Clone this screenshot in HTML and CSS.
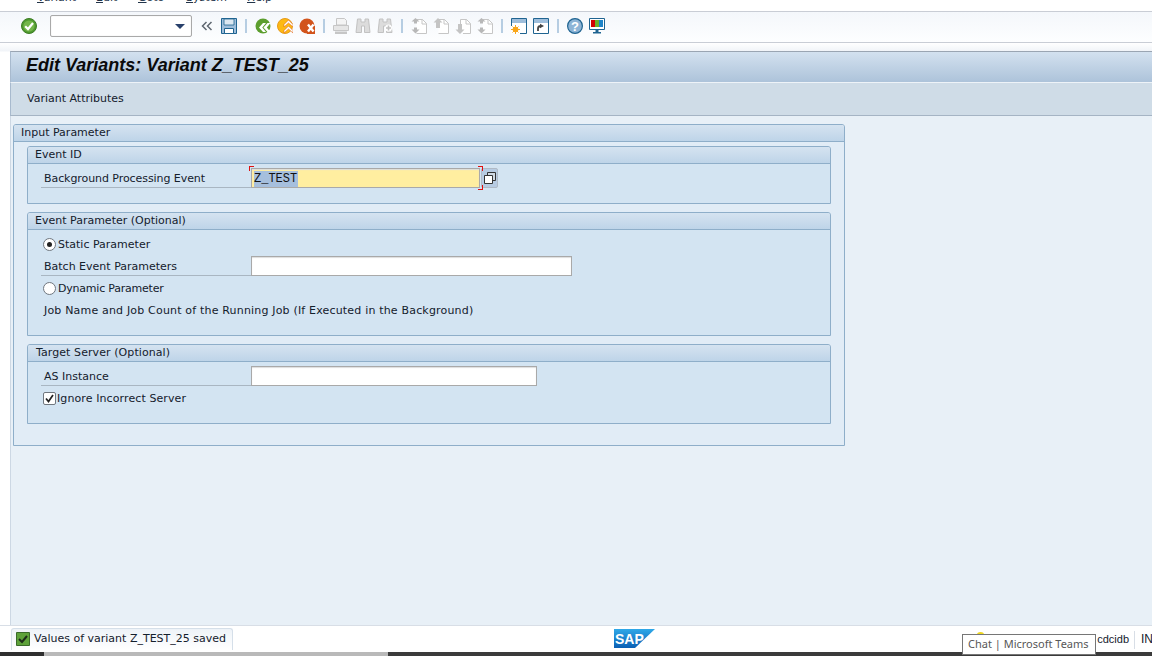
FILE: index.html
```html
<!DOCTYPE html>
<html lang="en">
<head>
<meta charset="utf-8">
<title>Edit Variants</title>
<link rel="stylesheet" href="styles.css">
</head>
<body>
<nav class="menubar">
  <span class="m m1"><u>V</u>ariant</span><span class="m m2"><u>E</u>dit</span><span class="m m3"><u>G</u>oto</span><span class="m m4"><u>S</u>ystem</span><span class="m m5"><u>H</u>elp</span>
</nav>
<header class="toolbar">
  <span class="tool"><svg viewBox="0 0 16 16"><circle cx="8" cy="8" r="7.500" fill="#4f9a2f" stroke="#3c7d24"/><circle cx="8" cy="8" r="5.600" fill="#74b64a"/><path d="M4.200 8.200 7 11l5-6" fill="none" stroke="#fff" stroke-width="2.200"/></svg></span>
  <span class="combo"><span class="arrow"></span></span>
  <span class="tool"><svg viewBox="0 0 16 16"><path d="M7.500 4 3.500 8l4 4M12.500 4l-4 4 4 4" fill="none" stroke="#5e6670" stroke-width="1.500"/></svg></span>
  <span class="tool"><svg viewBox="0 0 16 16"><path d="M.5.500h15v15H.5z" fill="#9fbedb" stroke="#1f6491"/><path d="M3 1h10v6H3z" fill="#dce8f2" stroke="#1f6491" stroke-width=".8"/><path d="M3.500 10.500h9v5h-9z" fill="#fff" stroke="#1f6491"/></svg></span>
  <span class="sep"></span>
  <span class="tool"><svg viewBox="0 0 16 16"><circle cx="8" cy="8" r="7.500" fill="#5c9e2e"/><path d="M8 5 4 9.500 8 14h3L7.300 9.500 11 5zM12.500 5 8.500 9.500l4 4.500h3l-3.700-4.500L15.500 5z" fill="#fff"/></svg></span>
  <span class="tool"><svg viewBox="0 0 16 16"><circle cx="8" cy="8" r="7.500" fill="#fdb913" stroke="#e69a1a"/><path d="M11.500 2 7 6.500V9l4.500-4L16 9V6.500zM11.500 8 7 12.500V15l4.500-4 4.500 4v-2.500z" fill="#fff" stroke="#e0661a" stroke-width=".6"/></svg></span>
  <span class="tool"><svg viewBox="0 0 16 16"><circle cx="8" cy="8" r="7.500" fill="#d2541c"/><path d="M8 8h8v8H8z" fill="#d2541c"/><path d="m9 6.500 5.500 7M14.500 6.500 9 13.500" stroke="#fff" stroke-width="2.400"/></svg></span>
  <span class="sep"></span>
  <span class="tool"><svg viewBox="0 0 16 16"><path d="M3.500.500h8l2 2V7h-10z" fill="#f4f4f4" stroke="#c6c6c6"/><path d="M.500 7.500h15v5H.500z" fill="#e6e6e6" stroke="#c6c6c6"/><path d="M2 13.500h12V16H2z" fill="#c6c6c6"/></svg></span>
  <span class="tool"><svg viewBox="0 0 16 16"><path d="M2.500 1h3.500v3h4V1h3.500L15 14.500H9.500V8h-3v6.500H1z" fill="#dcdcdc" stroke="#c2c2c2"/></svg></span>
  <span class="tool"><svg viewBox="0 0 16 16"><path d="M2.500 1h3.500v3h4V1h3.500L15 14.500H9.500V8h-3v6.500H1z" fill="#dcdcdc" stroke="#c2c2c2"/><circle cx="11.500" cy="10" r="3.500" fill="#fff"/><path d="M9 10h5M11.500 7.500v5" stroke="#c2c2c2" stroke-width="1.600"/></svg></span>
  <span class="sep"></span>
  <span class="tool"><svg viewBox="0 0 16 16"><path d="M5.500 1.500h6l4 4v10h-10" fill="#fff" stroke="#c6c6c6"/><path d="M11 1v5h4.500" fill="none" stroke="#c6c6c6"/><path d="m4.500 0 4 3.500H6v2H3v-2H.5zM3 9.500h3v2h2.500l-4 4-4-4H3z" fill="#b8b8b8"/></svg></span>
  <span class="tool"><svg viewBox="0 0 16 16"><path d="M5.500 1.500h6l4 4v10H5.500" fill="#fff" stroke="#c6c6c6"/><path d="M11 1v5h4.500" fill="none" stroke="#c6c6c6"/><path d="m5 0 4.500 4.500H7V10H3V4.500H.5z" fill="#c4c4c4"/></svg></span>
  <span class="tool"><svg viewBox="0 0 16 16"><path d="M5.500 8V1.500h6l4 4v10H8" fill="#fff" stroke="#c6c6c6"/><path d="M11 1v5h4.500" fill="none" stroke="#c6c6c6"/><path d="M3 6h4v5.500h2.500L5 16 .5 11.500H3z" fill="#c4c4c4"/></svg></span>
  <span class="tool"><svg viewBox="0 0 16 16"><path d="M5.500 1.500h6l4 4v10h-10" fill="#fff" stroke="#c6c6c6"/><path d="M11 1v5h4.500" fill="none" stroke="#c6c6c6"/><path d="m4.500 0 4 3.500H6v2H3v-2H.5zM3 9.500h3v2h2.500l-4 4-4-4H3z" fill="#b8b8b8"/></svg></span>
  <span class="sep"></span>
  <span class="tool"><svg viewBox="0 0 16 16"><path d="M.500.500h15v15H.500z" fill="#fff" stroke="#1f6491"/><path d="M1 1h14v4H1z" fill="#9fbedb"/><path d="M0 8h9v8H0z" fill="#fff"/><circle cx="4.500" cy="11.500" r="2.800" fill="#f9a61a"/><path d="M4.500 7v9M0 11.500h9M1.500 8.500l6 6M7.500 8.500l-6 6" stroke="#f9a61a"/></svg></span>
  <span class="tool"><svg viewBox="0 0 16 16"><path d="M.500.500h15v15H.500z" fill="#fff" stroke="#1f6491"/><path d="M1 1h14v4H1z" fill="#9fbedb"/><path d="M5 13v-2.500q0-2.500 3-2.500" fill="none" stroke="#444" stroke-width="1.800"/><path d="m7 5.800 4 2.200-4 2.200z" fill="#444"/></svg></span>
  <span class="sep"></span>
  <span class="tool"><svg viewBox="0 0 16 16"><circle cx="8" cy="8" r="7.400" fill="#8db4d6" stroke="#1f6491" stroke-width="1.200"/><text class="qmark" x="8" y="12.500" text-anchor="middle">?</text></svg></span>
  <span class="tool"><svg viewBox="0 0 16 16"><path d="M.500.500h15v11H.500z" fill="#fff" stroke="#1f6491"/><path d="M2 2h4v7H2z" fill="#d40000"/><path d="M6 2h4v7H6z" fill="#6cb02c"/><path d="M10 2h4v7h-4z" fill="#1f85c9"/><path d="M6.500 12h3v2h-3zM4 14h8v1.500H4z" fill="#1f6491"/></svg></span>
</header>
<div class="workspace">
  <div class="screen">
    <h1 class="title">Edit Variants: Variant Z_TEST_25</h1>
    <div class="apptools">Variant Attributes</div>
    <main class="main">
      <section class="group outer">
        <div class="head outerhead">Input Parameter</div>
        <div class="outerbody">
          <section class="group inner h58">
            <div class="head">Event ID</div>
            <div class="body first">
              <div class="row">
                <label class="label tight">Background Processing Event</label>
                <span class="focuswrap">
                  <span class="input required"><span class="sel">Z_TEST</span></span>
                  <i class="corner tl"></i><i class="corner tr"></i><i class="corner br"></i>
                </span>
                <span class="f4"><svg viewBox="0 0 12 12"><path d="M3.500.500h8v8h-8z" fill="#cfd8e2" stroke="#333"/><path d="M.500 3.500h8v8h-8z" fill="#fff" stroke="#333"/></svg></span>
              </div>
            </div>
          </section>
          <section class="group inner h124">
            <div class="head">Event Parameter (Optional)</div>
            <div class="body">
              <div class="row"><span class="radio on"></span><span class="opt">Static Parameter</span></div>
              <div class="row"><label class="label">Batch Event Parameters</label><span class="input w321"></span></div>
              <div class="row"><span class="radio"></span><span class="opt narrow">Dynamic Parameter</span></div>
              <div class="row"><span class="plain">Job Name and Job Count of the Running Job (If Executed in the Background)</span></div>
            </div>
          </section>
          <section class="group inner h80">
            <div class="head wide">Target Server (Optional)</div>
            <div class="body">
              <div class="row"><label class="label">AS Instance</label><span class="input w286"></span></div>
              <div class="row"><span class="check"><svg viewBox="0 0 11 11"><path d="m2 5.500 2.500 3L9 2" fill="none" stroke="#222" stroke-width="1.700"/></svg></span><span class="opt chk">Ignore Incorrect Server</span></div>
            </div>
          </section>
        </div>
      </section>
    </main>
  </div>
</div>
<footer class="status">
  <div class="message">
    <svg class="msgicon" viewBox="0 0 14 14"><path d="M.500.500h13v13H.500z" fill="#5ea23a" stroke="#3a6b2a"/><path d="m3 7 3 3 5-6" fill="none" stroke="#1d2d1a" stroke-width="2"/></svg>
    <span>Values of variant Z_TEST_25 saved</span>
  </div>
  <div class="logo"><svg viewBox="0 0 41 19"><defs><linearGradient id="sapg" x1="0" y1="0" x2="0" y2="1"><stop offset="0" stop-color="#2fa8e8"/><stop offset="1" stop-color="#0a5fb4"/></linearGradient></defs><path d="M0 0h41L21 19H0z" fill="url(#sapg)"/><text class="saptext" x="1" y="14.500">SAP</text></svg></div>
  <div class="fields"><span class="key"></span><span class="fld sys">cdcidb</span><span class="fld ins">IN</span></div>
  <div class="tooltip">Chat | Microsoft Teams</div>
</footer>
<div class="taskbar"><span class="tb1"></span><span class="tb2"></span><span class="tb3"></span></div>
</body>
</html>
```

FILE: styles.css
```css
* { box-sizing: border-box; }
html, body { margin: 0; padding: 0; }
body {
  width: 1152px; height: 656px; overflow: hidden;
  display: flex; flex-direction: column;
  font: 11px/16px "DejaVu Sans", "Liberation Sans", sans-serif;
  color: #14202c; background: #fff;
}
svg { display: block; }

.menubar { height: 12px; flex: none; overflow: hidden; border-bottom: 1px solid #c9cdd5; display: flex; background: #fff; }
.m { display: block; margin-top: -10px; height: 16px; color: #22344a; }
.m1 { margin-left: 37px; width: 59px; }
.m2 { width: 42px; }
.m3 { width: 48px; }
.m4 { width: 61px; }

.toolbar {
  height: 31px; flex: none; display: flex; align-items: center; padding: 0 0 2px 18px;
  background: linear-gradient(#f4f7fb, #fdfeff); border-bottom: 1px solid #c9cdd5;
}
.tool { width: 22px; height: 16px; flex: none; display: flex; justify-content: center; }
.tool svg { width: 16px; height: 16px; }
.sep { width: 2px; height: 14px; flex: none; margin: 0 5px; background: #b6cde2; }
.combo {
  width: 142px; height: 22px; margin: 0 4px 0 10px; flex: none; position: relative;
  background: #fff; border: 1px solid #a9a9a9; border-radius: 2px; box-shadow: inset 0 0 1px #ccc;
}
.arrow { position: absolute; right: 6px; top: 8px; border: 5px solid transparent; border-top: 5px solid #29406b; border-bottom: 0; width: 0; height: 0; }
.qmark { font: bold 13px "Liberation Sans", sans-serif; fill: #fff; }

.workspace { flex: 1; min-height: 0; display: flex; padding: 8px 0 0 10px; background: linear-gradient(#fff, #f1f4f8 8px, #fff 9px); }
.screen { flex: 1; display: flex; flex-direction: column; min-width: 0; }
.title {
  margin: 0; height: 32px; flex: none; padding: 3px 0 0 15px;
  font: italic bold 18px/20px "Liberation Sans", sans-serif; color: #0a0a0a;
  background: linear-gradient(#d3e1ef, #adc3da); border-top: 1px solid #9aa5b2; border-left: 1px solid #a8bace; border-bottom: 1px solid #eef3f8;
}
.apptools {
  height: 33px; flex: none; padding: 8px 0 0 16px;
  background: #cfdce7; border-bottom: 1px solid #a5b4c4; border-left: 1px solid #a8bace;
}
.main { flex: 1; background: #e8f0f7; padding: 8px 0 0 2px; border-left: 1px solid #cdd8e4; }

.group { border: 1px solid #8eaec9; border-radius: 3px 3px 0 0; }
.outer { width: 832px; height: 322px; background: #e1ecf6; }
.inner { width: 804px; background: #d3e4f2; }
.h58 { height: 58px; }
.h124 { height: 124px; }
.h80 { height: 80px; }
.head { height: 17px; padding: 0 0 0 7px; line-height: 15px; background: linear-gradient(#d5e3f0, #bed4e8); border-bottom: 1px solid #8eaec9; border-radius: 2px 2px 0 0; }
.outerhead { height: 17px; }
.wide { padding-left: 8px; letter-spacing: .08px; }
.outerbody { padding: 4px 13px 0; display: flex; flex-direction: column; gap: 8px; }
.body { padding: 4px 0 0 13px; }
.first { padding-top: 4px; }
.row { height: 22px; display: flex; align-items: flex-start; }
.label { width: 210px; height: 20px; padding: 3px 0 0 3px; border-bottom: 1px solid #a9b6c2; flex: none; }
.tight { letter-spacing: -.07px; }
.plain { padding: 3px 0 0 3px; letter-spacing: .18px; }
.opt { padding: 3px 0 0 2px; }
.narrow { letter-spacing: -.22px; }
.chk { padding-left: 1px; letter-spacing: .1px; }
.input { display: block; height: 20px; background: #fff; border: 1px solid #a9a9a9; box-shadow: inset 0 1px 1px #ddd; flex: none; }
.w321 { width: 321px; }
.w286 { width: 286px; }
.required { width: 229px; height: 20px; background: #ffeea0; padding: 2px 0 0 2px; font: 12px/16px "Liberation Mono", monospace; color: #111; }
.sel { display: inline-block; background: #a6bfdd; height: 16px; padding-right: 1px; }
.focuswrap { position: relative; display: block; flex: none; }
.corner { position: absolute; width: 5px; height: 5px; border: 0 solid #e01010; }
.tl { left: -2px; top: -2px; border-width: 1px 0 0 1px; }
.tr { right: -3px; top: -2px; border-width: 1px 1px 0 0; }
.br { right: -3px; bottom: -2px; border-width: 0 1px 1px 0; }
.f4 { width: 17px; height: 20px; margin-left: 1px; flex: none; display: flex; align-items: center; justify-content: center; background: #b7cbe2; border: 1px solid #b0bac6; border-radius: 2px; }
.f4 svg { width: 12px; height: 12px; }
.radio { width: 13px; height: 13px; margin: 4px 0 0 2px; flex: none; border: 1px solid #70777f; border-radius: 50%; background: #fff; position: relative; }
.on::after { content: ""; position: absolute; left: 3px; top: 3px; width: 5px; height: 5px; border-radius: 50%; background: #222; }
.check { width: 13px; height: 13px; margin: 4px 0 0 2px; flex: none; border: 1px solid #70777f; border-radius: 2px; background: #fff; }

.status { height: 27px; flex: none; display: flex; position: relative; background: #fff; border-top: 1px solid #d8dee6; }
.message {
  width: 222px; height: 22px; margin: 2px 0 0 11px; flex: none; display: flex; align-items: center; gap: 4px; padding: 0 0 2px 4px;
  background: linear-gradient(#eef3f8, #fff); border: 1px solid #d5dfe9; border-bottom: 0; border-radius: 3px 3px 0 0;
}
.msgicon { width: 14px; height: 14px; flex: none; }
.logo { width: 41px; height: 19px; margin: 3px 0 0 381px; flex: none; }
.logo svg { width: 41px; height: 19px; }
.saptext { font: bold 14px "Liberation Sans", sans-serif; fill: #fff; }
.fields { flex: 1; display: flex; align-items: flex-start; justify-content: flex-end; padding-top: 5px; }
.key { width: 7px; height: 5px; margin: 1px 112px 0 0; background: #f0d820; border-radius: 50%; }
.fld { display: block; height: 18px; font: 12px/16px "Liberation Sans", sans-serif; }
.sys { width: 39px; padding-right: 5px; border-right: 1px solid #d8dee6; text-align: right; white-space: nowrap; font-size: 11px; }
.ins { width: 17px; padding-left: 6px; overflow: hidden; }
.tooltip {
  position: absolute; left: 962px; top: 8px; width: 134px; height: 21px; z-index: 2; white-space: nowrap;
  padding: 1px 0 0 5px; font: 11px/16px "Noto Sans", sans-serif; background: #fff; border: 1px solid #767676; color: #575757;
}
.taskbar { height: 4px; flex: none; display: flex; background: #3b3b3b; }
.tb1 { width: 44px; background: #2f2f2f; }
.tb2 { width: 344px; background: #b9b9b9; }
.tb3 { flex: 1; background: #3b3b3b; }
```
